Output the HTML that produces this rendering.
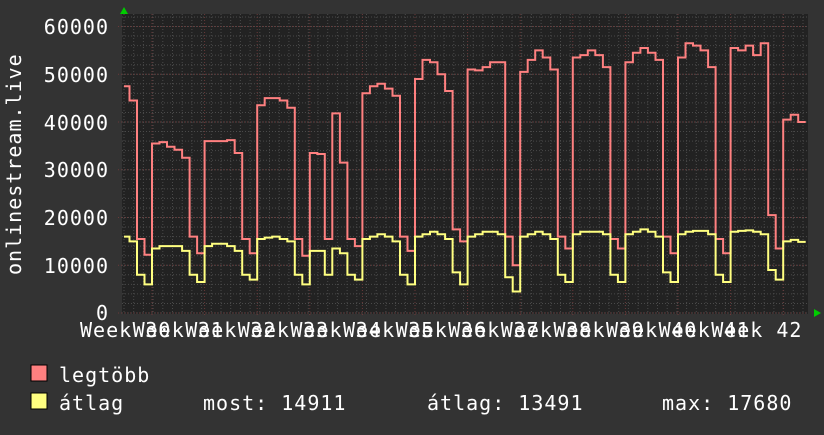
<!DOCTYPE html>
<html><head><meta charset="utf-8"><style>
html,body{margin:0;padding:0;background:#333;}
body{width:824px;height:430px;overflow:hidden;}
svg text{font-family:"DejaVu Sans Mono","Liberation Mono",monospace;fill:#fff;font-size:20px;letter-spacing:1px;}
</style></head><body>
<svg id="g" width="824" height="430" xmlns="http://www.w3.org/2000/svg">
<rect width="824" height="430" fill="#333"/>
<rect x="122" y="14" width="686" height="300" fill="#222"/>
<g id="grid"></g>
<g id="data"></g>
<polygon points="120,14 128,14 124,7" fill="#0c0"/>
<polygon points="814,309 814,317 821,313" fill="#0c0"/>
<g text-anchor="end">
<text x="109" y="34">60000</text>
<text x="109" y="82">50000</text>
<text x="109" y="130">40000</text>
<text x="109" y="177">30000</text>
<text x="109" y="225">20000</text>
<text x="109" y="273">10000</text>
<text x="109" y="320">0</text>
</g>
<text transform="translate(21,275) rotate(-90)">onlinestream.live</text>
<g id="xl"></g>
<rect x="31" y="365" width="16" height="16" fill="#ff8080" stroke="#000" stroke-width="1"/>
<rect x="31" y="393" width="16" height="16" fill="#ffff80" stroke="#000" stroke-width="1"/>
<text x="59" y="382">legtöbb</text>
<text x="59" y="410">átlag</text>
<text x="203" y="410">most: 14911</text>
<text x="427" y="410">átlag: 13491</text>
<text x="662" y="410">max: 17680</text>
</svg>
<script>
var NS="http://www.w3.org/2000/svg";
function el(p,n,a){var e=document.createElementNS(NS,n);for(var k in a)e.setAttribute(k,a[k]);p.appendChild(e);return e;}
var grid=document.getElementById('grid');
for(var y=313;y>=14;y-=9.55){el(grid,'line',{x1:122,x2:808,y1:y,y2:y,stroke:'#4a4a4a','stroke-dasharray':'1,2','stroke-width':1});}
for(var x=124;x<=808;x+=9.7){el(grid,'line',{x1:x,x2:x,y1:14,y2:313,stroke:'#4a4a4a','stroke-dasharray':'1,2','stroke-width':1});}
for(var v=0;v<=60;v+=10){var yy=313-v*4.775;el(grid,'line',{x1:118,x2:808,y1:yy,y2:yy,stroke:'#6a3a3a','stroke-dasharray':'1,2','stroke-width':1});}
for(var w=0;w<=12;w++){var xx=152+w*52.6;el(grid,'line',{x1:xx,x2:xx,y1:14,y2:317,stroke:'#6a3a3a','stroke-dasharray':'1,2','stroke-width':1});}
var xl=document.getElementById('xl');
for(var w=0;w<=12;w++){var t=el(xl,'text',{x:80+w*52.6,y:337});t.textContent='Week '+(30+w);}
var R=[[47.5,44.5,15.5,12.2],
[35.5,35.8,34.8,34.2,32.5,16,12.5],[36,36,36,36.2,33.5,15.5,12.5],[43.5,45,45,44.5,43,15.5,12],
[33.5,33.3,15.5,41.8,31.5,15.5,14],[46,47.5,48,47,45.5,16,13],[49,53,52.5,50,46.5,17.5,15],
[51,50.8,51.5,52.5,52.5,16,10],[50.5,53,55,53.5,51,16,13.5],[53.5,54,55,54,51.5,15.5,13.5],
[52.5,54.5,55.5,54.5,53,16,12.5],[53.5,56.5,56,55,51.5,15.5,12.5],[55.5,55,56,54,56.5,20.5,13.5],[40.5,41.5,40]];
var Y=[[16,15,8,6],
[13.5,14,14,14,13,8,6.5],[14,14.5,14.5,14,13,8,7],[15.5,15.8,16,15.5,15,8,6],
[13,13,8,13.5,12.5,8,7],[15.5,16,16.5,16,15,8,6],[16,16.5,17,16.5,15.5,8.5,6],
[16,16.5,17,17,16.5,7.5,4.5],[16,16.5,17,16.5,15.5,8,6.5],[16.5,17,17,17,16.5,8,6.5],
[16.5,17,17.5,17,16,8.5,6.5],[16.5,17,17.2,17.2,16.5,8,6.5],[17,17.2,17.3,17,16.5,9,7],[15,15.3,14.9]];
var dw=52.6/7;
function path(D,col){var d='',first=true;
 for(var w=0;w<D.length;w++){var a=D[w];var x0=(w==0)?152-dw*a.length:152+(w-1)*52.6;
  for(var i=0;i<a.length;i++){var x1=x0+i*dw,x2=Math.min(x1+dw,806),y=(313-a[i]*4.775).toFixed(1);
   if(w==0&&i==0)x1=124;
   d+=(first?'M':'L')+x1.toFixed(1)+' '+y+'L'+x2.toFixed(1)+' '+y;first=false;}}
 el(document.getElementById('data'),'path',{d:d,fill:'none',stroke:col,'stroke-width':2});}
path(R,'#ff8080');path(Y,'#ffff80');
</script>
</body></html>
